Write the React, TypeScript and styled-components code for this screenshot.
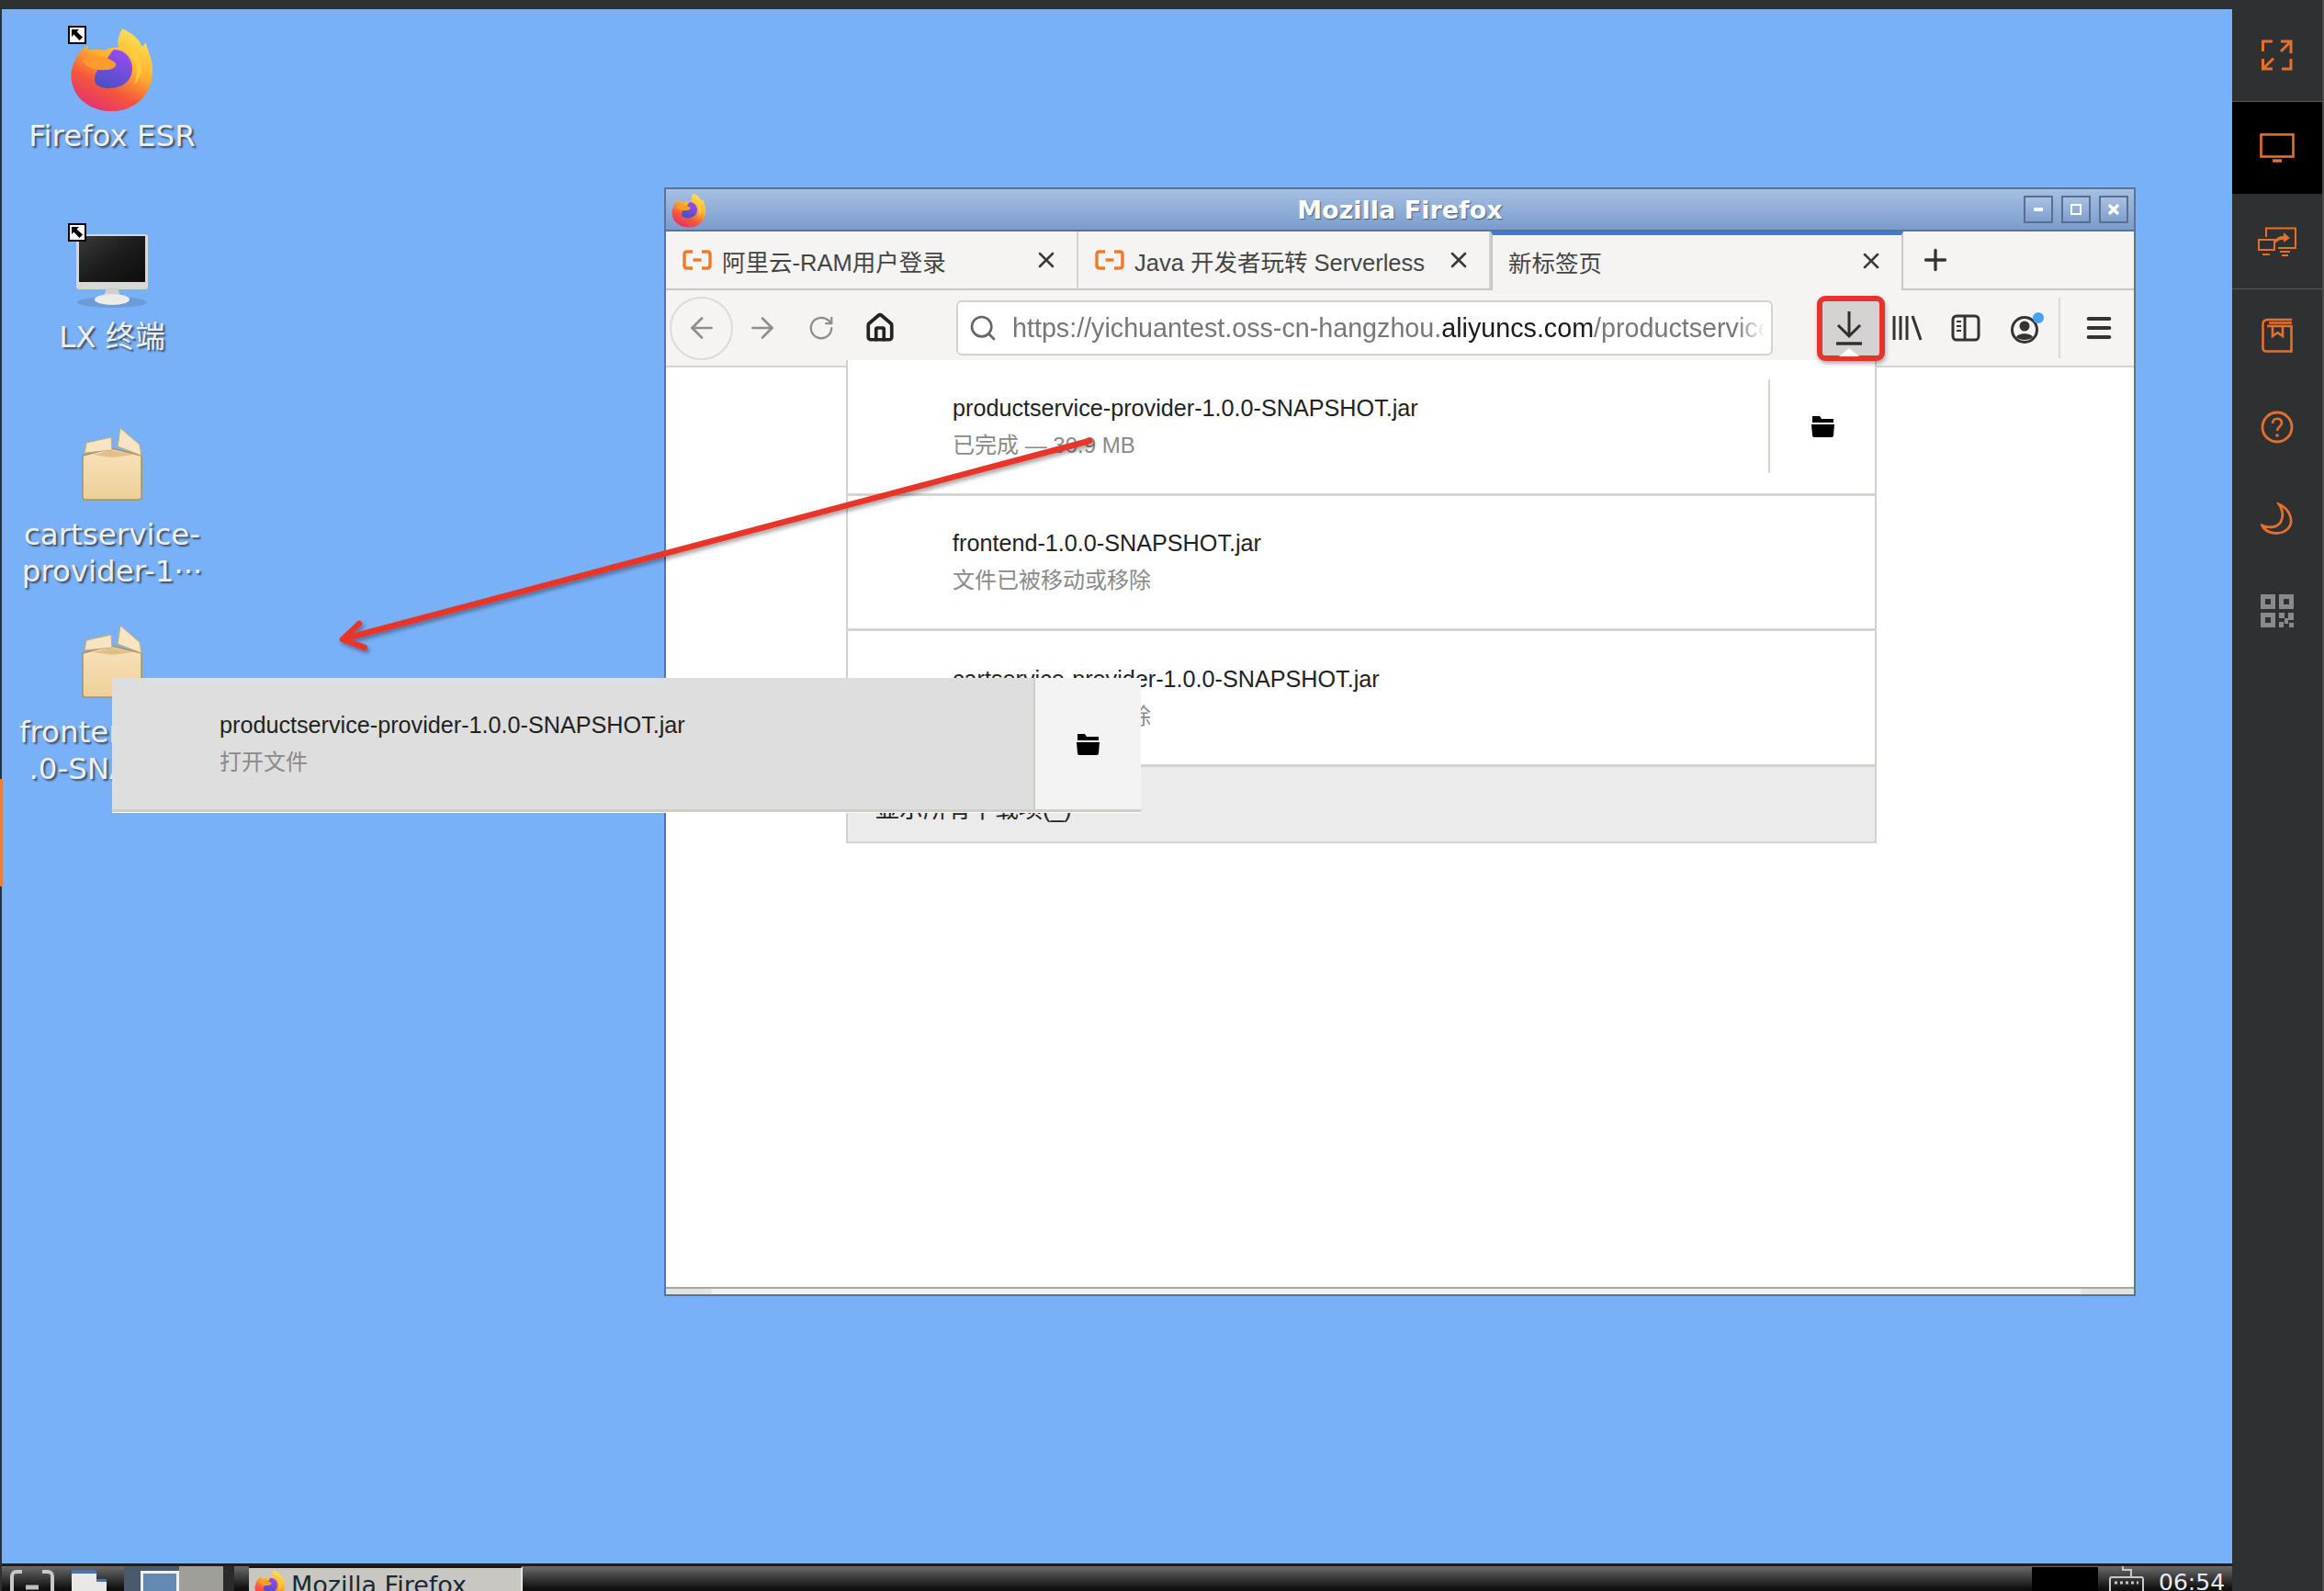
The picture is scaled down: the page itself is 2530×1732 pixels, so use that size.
import styled, { createGlobalStyle } from "styled-components";
import { ArrowLeft, ArrowRight, Home, Menu, Plus, RotateCw, Search, X } from "lucide-react";

const SANS = `"Liberation Sans", "Noto Sans CJK SC", sans-serif`;
const DEJAVU = `"DejaVu Sans", "Noto Sans CJK SC", sans-serif`;
const ORANGE = "#e5702e";

const GlobalStyle = createGlobalStyle`
  html, body { margin: 0; padding: 0; background: #2f3032; }
  * { box-sizing: border-box; }
`;

function FirefoxLogo({ size }: { size: number }) {
  const id = `ff${size}`;
  return (
    <svg width={size} height={size} viewBox="0 0 100 100">
      <defs>
        <linearGradient id={`${id}a`} x1="0.8" y1="0" x2="0.3" y2="1">
          <stop offset="0" stopColor="#ffe75a" />
          <stop offset="0.42" stopColor="#ffb02e" />
          <stop offset="0.72" stopColor="#f6563c" />
          <stop offset="1" stopColor="#e2326e" />
        </linearGradient>
        <linearGradient id={`${id}b`} x1="0.7" y1="0" x2="0.3" y2="1">
          <stop offset="0" stopColor="#9a4cf0" />
          <stop offset="1" stopColor="#4a4fc4" />
        </linearGradient>
      </defs>
      <path
        d="M62 1C58 9 55 17 58 24C52 23 46 24 42 27C34 26 28 25 22 27C21 25 21 22 22 20C14 25 8 32 4 44C1 52 1 60 3 67C8 87 28 99 50 99C76 99 97 80 98 54C99 36 91 26 90 17C88 21 86 22 85 22C82 12 72 6 62 1Z"
        fill={`url(#${id}a)`}
      />
      <path d="M52 26C70 26 78 44 72 58C66 72 44 76 32 68C26 62 30 50 40 44C44 38 46 32 52 26Z" fill={`url(#${id}b)`} />
      <path d="M14 40C26 30 44 34 54 42C57 46 50 50 42 50C30 52 20 46 14 40Z" fill="#ff9a2e" />
      <path d="M62 24C76 30 84 48 76 68C90 54 86 34 74 22C70 20 66 21 62 24Z" fill="#ffcb3d" />
    </svg>
  );
}

function ShortcutBadge() {
  return (
    <Badge>
      <svg width="14" height="14" viewBox="0 0 14 14">
        <path d="M1 1H9L6.6 3.4L13 9.5L9.5 13L3.4 6.6L1 9Z" fill="#000" />
      </svg>
    </Badge>
  );
}

function MonitorArt() {
  return (
    <svg width="90" height="84" viewBox="0 0 90 84">
      <defs>
        <linearGradient id="screen" x1="0" y1="0" x2="1" y2="1">
          <stop offset="0" stopColor="#3a3a3a" />
          <stop offset="0.5" stopColor="#1c1c1c" />
          <stop offset="1" stopColor="#0c0c0c" />
        </linearGradient>
      </defs>
      <ellipse cx="45" cy="76" rx="38" ry="6" fill="#5f86b8" opacity="0.5" />
      <rect x="6" y="2" width="78" height="60" rx="3" fill="#d8d8d6" />
      <rect x="9" y="4" width="72" height="50" fill="url(#screen)" />
      <path d="M36 70L39 60H51L54 70Z" fill="#cfcfcd" />
      <ellipse cx="45" cy="73" rx="19" ry="6" fill="#ececea" />
    </svg>
  );
}

function PackageArt() {
  return (
    <svg width="70" height="80" viewBox="0 0 70 80">
      <defs>
        <linearGradient id="boxFront" x1="0" y1="0" x2="0" y2="1">
          <stop offset="0" stopColor="#f8e3bc" />
          <stop offset="1" stopColor="#edcf98" />
        </linearGradient>
      </defs>
      <path d="M3 31L34 23L67 31V76C67 78 66 79 64 79H6C4 79 3 78 3 76Z" fill="url(#boxFront)" stroke="#b08f5c" strokeWidth="1.5" />
      <path d="M5 28L7 17L34 11L35 25Z" fill="#f7e4c2" stroke="#c6a877" />
      <path d="M44 1L41 21L67 31L65 19Z" fill="#f7e4c2" stroke="#c6a877" />
      <path d="M14 30L35 25L58 30L35 33Z" fill="#dfc08b" />
    </svg>
  );
}

function FolderGlyph() {
  return (
    <svg width="27" height="24" viewBox="0 0 27 24">
      <path d="M2 1H10L12 4H25V8H2Z" fill="#000" />
      <path d="M1 10H26L25 22C25 23 24 24 23 24H4C3 24 2 23 2 22Z" fill="#000" />
    </svg>
  );
}

function AliyunGlyph() {
  return (
    <svg width="32" height="22" viewBox="0 0 32 22" fill="none" stroke="#ef7a2a" strokeWidth="3.4">
      <path d="M11 2H5C3 2 2 3 2 5V17C2 19 3 20 5 20H11" />
      <path d="M21 2H27C29 2 30 3 30 5V17C30 19 29 20 27 20H21" />
      <path d="M11.5 11H20.5" />
    </svg>
  );
}

const desktopItems = [
  { key: "firefox", art: <FirefoxLogo size={92} />, lines: ["Firefox ESR"], shortcut: true, slot: 118, lift: 6 },
  { key: "term", art: <MonitorArt />, lines: ["LX 终端"], shortcut: true, slot: 122, lift: 10 },
  { key: "cart", art: <PackageArt />, lines: ["cartservice-", "provider-1···"], shortcut: false, slot: 122, lift: 17 },
  { key: "front", art: <PackageArt />, lines: ["frontend-1.0", ".0-SNAPS···"], shortcut: false, slot: 122, lift: 17 },
];

const tabs = [
  { label: "阿里云-RAM用户登录", icon: true, active: false },
  { label: "Java 开发者玩转 Serverless", icon: true, active: false },
  { label: "新标签页", icon: false, active: true },
];

const downloads = [
  { name: "productservice-provider-1.0.0-SNAPSHOT.jar", note: "已完成 — 30.9 MB", open: true },
  { name: "frontend-1.0.0-SNAPSHOT.jar", note: "文件已被移动或移除", open: false },
  { name: "cartservice-provider-1.0.0-SNAPSHOT.jar", note: "文件已被移动或移除", open: false },
];

export default function App() {
  return (
    <>
      <GlobalStyle />
      <Screen>
        <TopStrip />
        <Body>
          <Desktop>
            <IconColumn>
              {desktopItems.map((item) => (
                <DesktopIcon key={item.key}>
                  <ArtSlot $height={item.slot} $lift={item.lift}>
                    {item.art}
                    {item.shortcut && <ShortcutBadge />}
                  </ArtSlot>
                  {item.lines.map((line) => (
                    <IconLabel key={line}>{line}</IconLabel>
                  ))}
                </DesktopIcon>
              ))}
            </IconColumn>

            <EdgeMark />

            <Window>
              <TitleBar>
                <TitleLogo>
                  <FirefoxLogo size={38} />
                </TitleLogo>
                <TitleText>Mozilla Firefox</TitleText>
                <WindowButtons>
                  <WindowButton>
                    <svg width="10" height="4" viewBox="0 0 10 4"><rect width="10" height="4" fill="#fff" /></svg>
                  </WindowButton>
                  <WindowButton>
                    <svg width="12" height="12" viewBox="0 0 12 12" fill="none" stroke="#fff" strokeWidth="2"><rect x="1" y="1" width="10" height="10" /></svg>
                  </WindowButton>
                  <WindowButton>
                    <svg width="12" height="12" viewBox="0 0 12 12" stroke="#fff" strokeWidth="3.4"><path d="M1 1L11 11M11 1L1 11" /></svg>
                  </WindowButton>
                </WindowButtons>
              </TitleBar>

              <TabBar>
                {tabs.map((tab) => (
                  <Tab key={tab.label} $active={tab.active}>
                    {tab.icon && (
                      <TabIcon>
                        <AliyunGlyph />
                      </TabIcon>
                    )}
                    <TabLabel>{tab.label}</TabLabel>
                    <TabClose>
                      <X size={28} strokeWidth={2.2} color="#3a3a3a" />
                    </TabClose>
                  </Tab>
                ))}
                <NewTab>
                  <Plus size={36} strokeWidth={2.2} color="#333" />
                </NewTab>
              </TabBar>

              <NavBar>
                <BackButton>
                  <ArrowLeft size={36} strokeWidth={1.8} color="#8e8e8e" />
                </BackButton>
                <NavButton>
                  <ArrowRight size={36} strokeWidth={1.8} color="#8e8e8e" />
                </NavButton>
                <NavButton>
                  <RotateCw size={30} strokeWidth={1.8} color="#8e8e8e" />
                </NavButton>
                <NavButton>
                  <Home size={34} strokeWidth={2.6} color="#222" />
                </NavButton>
                <UrlBox>
                  <Search size={32} strokeWidth={2} color="#666" />
                  <UrlText>
                    https://yichuantest.oss-cn-hangzhou.<strong>aliyuncs.com</strong>/productservice
                  </UrlText>
                </UrlBox>
                <DownloadButton>
                  <svg width="34" height="40" viewBox="0 0 34 40" fill="none" stroke="#2e2e2e" strokeWidth="3">
                    <path d="M17 2V28M5 17L17 29L29 17" />
                    <path d="M3 37H31" strokeWidth="3.4" />
                  </svg>
                  <Notch />
                </DownloadButton>
                <ToolButton>
                  <svg width="34" height="30" viewBox="0 0 34 30" fill="none" stroke="#333" strokeWidth="3">
                    <path d="M3 2V28M10 2V28M17 2V28M23 2L32 28" />
                  </svg>
                </ToolButton>
                <ToolButton>
                  <svg width="32" height="30" viewBox="0 0 32 30" fill="none" stroke="#333" strokeWidth="3">
                    <rect x="2" y="2" width="28" height="26" rx="4" />
                    <path d="M15 2V28" />
                    <path d="M6 8H11M6 13H11M6 18H11" strokeWidth="2" />
                  </svg>
                </ToolButton>
                <AccountButton>
                  <svg width="38" height="36" viewBox="0 0 38 36">
                    <circle cx="16" cy="20" r="13.5" fill="none" stroke="#333" strokeWidth="3" />
                    <circle cx="16" cy="16" r="5.5" fill="#333" />
                    <path d="M7 28C9 23 23 23 25 28C21 32 11 32 7 28Z" fill="#333" />
                    <circle cx="31" cy="7" r="6" fill="#45a1ff" />
                  </svg>
                </AccountButton>
                <ToolDivider />
                <MenuButton>
                  <Menu size={34} strokeWidth={2.8} color="#333" />
                </MenuButton>
              </NavBar>

              <PageArea />
              <ScrollStrip />

              <DownloadPanel>
                {downloads.map((row) => (
                  <DownloadRow key={row.name}>
                    <RowText>
                      <FileName>{row.name}</FileName>
                      <FileNote>{row.note}</FileNote>
                    </RowText>
                    {row.open && (
                      <RowAction>
                        <FolderGlyph />
                      </RowAction>
                    )}
                  </DownloadRow>
                ))}
                <PanelFooter>显示所有下载项(_)</PanelFooter>
              </DownloadPanel>
            </Window>

            <DragGhost>
              <GhostMain>
                <FileName>productservice-provider-1.0.0-SNAPSHOT.jar</FileName>
                <FileNote>打开文件</FileNote>
              </GhostMain>
              <GhostAction>
                <FolderGlyph />
              </GhostAction>
            </DragGhost>

            <Taskbar>
              <TaskLauncher>
                <svg width="50" height="30" viewBox="0 0 50 30" fill="none" stroke="#c8c8c8" strokeWidth="4">
                  <path d="M14 6H8C5 6 3 8 3 11V30M36 6H42C45 6 47 8 47 11V30" />
                  <path d="M18 23H32" strokeWidth="5" stroke="#bdbdbd" />
                </svg>
              </TaskLauncher>
              <TaskFiles>
                <svg width="40" height="30" viewBox="0 0 40 30">
                  <rect x="1" y="4" width="27" height="26" fill="#e8e8e4" />
                  <rect x="1" y="4" width="27" height="4" fill="#4a74ab" />
                  <rect x="28" y="14" width="11" height="16" fill="#e8e8e4" />
                  <rect x="28" y="14" width="11" height="3" fill="#4a74ab" />
                </svg>
              </TaskFiles>
              <PagerActive>
                <PagerWindow />
              </PagerActive>
              <PagerIdle />
              <TaskItem>
                <FirefoxLogo size={34} />
                <TaskItemLabel>Mozilla Firefox</TaskItemLabel>
              </TaskItem>
              <TaskSpacer />
              <TrayBlack />
              <TrayKeyboard>
                <svg width="38" height="28" viewBox="0 0 38 28" fill="none" stroke="#c8c8c8" strokeWidth="2">
                  <path d="M15 0V4H24V12" />
                  <rect x="1" y="12" width="36" height="18" rx="2" />
                  <path d="M6 18H32" strokeDasharray="3 3" strokeWidth="3" />
                </svg>
              </TrayKeyboard>
              <Clock>06:54</Clock>
            </Taskbar>
          </Desktop>

          <SideRail>
            <RailItem $height={111} $divider $nudge={10}>
              <svg width="34" height="34" viewBox="0 0 34 34" fill="none" stroke={ORANGE} strokeWidth="3">
                <path d="M1.5 13V2H12M32 15V2H21M32 2L21 13M1.5 32L13 20.5M1.5 21V32H12M32 21V32H22" />
              </svg>
            </RailItem>
            <RailItem $height={100} $active>
              <svg width="38" height="32" viewBox="0 0 38 32" fill="none" stroke={ORANGE} strokeWidth="2.6">
                <rect x="1.5" y="1.5" width="35" height="24" />
                <path d="M14 30H24" strokeWidth="3.4" />
              </svg>
            </RailItem>
            <RailItem $height={104} $divider>
              <svg width="42" height="32" viewBox="0 0 42 32" fill="none" stroke={ORANGE} strokeWidth="2">
                <path d="M9 11V1.5H41V23H22" />
                <rect x="1" y="14" width="17" height="11" />
                <path d="M5 30H13M24 27H35M26 31H33" />
                <path d="M18 16C20 11 24 10 28 10V6L35 12L28 17V14C24 14 21 15 18 19Z" fill={ORANGE} stroke="none" />
              </svg>
            </RailItem>
            <RailItem $height={100}>
              <svg width="34" height="38" viewBox="0 0 34 38" fill="none" stroke={ORANGE} strokeWidth="2.6">
                <path d="M33 2H7C3 2 1.5 4 1.5 7V33C1.5 35 3 36.5 5 36.5H32.5V9H6" />
                <path d="M12 9V20L17.5 16L23 20V9M8 5.5H33" />
              </svg>
            </RailItem>
            <RailItem $height={100}>
              <svg width="36" height="36" viewBox="0 0 36 36" fill="none" stroke={ORANGE} strokeWidth="2.8">
                <circle cx="18" cy="18" r="16" />
                <path d="M13 14C13 7 23 7 23 13.5C23 17.5 18 17.5 18 22" strokeWidth="2.6" />
                <circle cx="18" cy="27" r="1.8" fill={ORANGE} stroke="none" />
              </svg>
            </RailItem>
            <RailItem $height={100}>
              <svg width="36" height="36" viewBox="0 0 36 36" fill="none" stroke={ORANGE} strokeWidth="2.8">
                <path d="M20 2C32 7 38 22 28 30C20 36 6 34 1.5 25C8 28 18 28 22 21C25 15 24 8 20 2Z" />
              </svg>
            </RailItem>
            <RailItem $height={100}>
              <svg width="36" height="36" viewBox="0 0 36 36">
                <path d="M0 0H16V16H0ZM5 5V11H11V5Z" fill="#8a8a8a" fillRule="evenodd" />
                <path d="M20 0H36V16H20ZM25 5V11H31V5Z" fill="#8a8a8a" fillRule="evenodd" />
                <path d="M0 20H16V36H0ZM5 25V31H11V25Z" fill="#8a8a8a" fillRule="evenodd" />
                <path d="M20 20H26V26H20ZM30 20H36V28H30ZM26 26H30V32H26ZM20 30H25V36H20ZM31 31H36V36H31Z" fill="#8a8a8a" />
              </svg>
            </RailItem>
          </SideRail>
        </Body>

        <ArrowLayer viewBox="0 0 2530 1732" width="2530" height="1732">
          <defs>
            <filter id="arrowShadow" x="-5%" y="-5%" width="110%" height="110%">
              <feDropShadow dx="2" dy="3" stdDeviation="2" floodColor="#000" floodOpacity="0.35" />
            </filter>
          </defs>
          <g filter="url(#arrowShadow)" fill="none" stroke="#e8362a" strokeWidth="6.5" strokeLinecap="round" strokeLinejoin="round">
            <path d="M1186 480L376 695" />
            <path d="M391 679L373 696L397 705" />
          </g>
        </ArrowLayer>
      </Screen>
    </>
  );
}

const Screen = styled.div`
  position: relative;
  display: flex;
  flex-direction: column;
  width: 2530px;
  height: 1732px;
  overflow: hidden;
  background: #2f3032;
  font-family: ${SANS};
`;

const TopStrip = styled.div`
  height: 10px;
  flex: none;
  background: #2f3032;
`;

const Body = styled.div`
  flex: 1;
  display: flex;
  min-height: 0;
`;

const Desktop = styled.main`
  position: relative;
  flex: 1;
  display: flex;
  flex-direction: column;
  margin-left: 2px;
  background: #79b1f8;
  min-width: 0;
`;

const EdgeMark = styled.div`
  position: absolute;
  left: -2px;
  top: 838px;
  width: 3px;
  height: 117px;
  background: #e8803a;
`;

const IconColumn = styled.div`
  flex: 1;
  display: flex;
  flex-direction: column;
  width: 240px;
`;

const DesktopIcon = styled.div`
  height: 215px;
  display: flex;
  flex-direction: column;
  align-items: center;
`;

const ArtSlot = styled.div<{ $height: number; $lift: number }>`
  position: relative;
  height: ${(p) => p.$height}px;
  width: 100px;
  padding-bottom: ${(p) => p.$lift}px;
  display: flex;
  justify-content: center;
  align-items: flex-end;
`;

const Badge = styled.span`
  position: absolute;
  left: 2px;
  top: 18px;
  width: 20px;
  height: 20px;
  display: flex;
  align-items: center;
  justify-content: center;
  background: #fff;
  border: 2px solid #000;
`;

const IconLabel = styled.div`
  font-family: ${DEJAVU};
  font-size: 32.5px;
  line-height: 40px;
  color: #efefef;
  white-space: nowrap;
  text-shadow: 2px 2px 2px rgba(40, 40, 40, 0.75);
`;

const Window = styled.section`
  position: absolute;
  left: 721px;
  top: 194px;
  width: 1602px;
  height: 1207px;
  display: flex;
  flex-direction: column;
  border: 2px solid #5b7394;
  background: #fff;
`;

const TitleBar = styled.header`
  position: relative;
  height: 46px;
  flex: none;
  display: flex;
  align-items: center;
  justify-content: center;
  background: linear-gradient(#a6bfe3, #7a9ccd);
  border-bottom: 2px solid #5b7394;
`;

const TitleLogo = styled.span`
  position: absolute;
  left: 6px;
  top: 4px;
  display: flex;
`;

const TitleText = styled.h1`
  margin: 0;
  font-family: ${DEJAVU};
  font-size: 27px;
  font-weight: bold;
  color: #fff;
  text-shadow: 1px 1px 1px rgba(40, 60, 90, 0.7);
`;

const WindowButtons = styled.div`
  position: absolute;
  right: 6px;
  top: 7px;
  display: flex;
  gap: 9px;
`;

const WindowButton = styled.span`
  width: 32px;
  height: 30px;
  display: flex;
  align-items: center;
  justify-content: center;
  background: linear-gradient(#a9c0e2, #7f9fce);
  border: 2px solid #56708f;
`;

const TabBar = styled.nav`
  height: 64px;
  flex: none;
  display: flex;
  background: #f5f4f3;
  border-bottom: 2px solid #c9c7c4;
`;

const Tab = styled.div<{ $active: boolean }>`
  position: relative;
  width: 449px;
  height: ${(p) => (p.$active ? "64px" : "62px")};
  display: flex;
  align-items: center;
  padding-left: ${(p) => (p.$active ? "17px" : "18px")};
  padding-right: 19px;
  padding-bottom: ${(p) => (p.$active ? "4px" : "0")};
  color: #444;
  font-size: 25.5px;
  background: #f5f4f3;
  border-right: 2px solid ${(p) => (p.$active ? "#c9c7c4" : "#d4d2cf")};
  border-top: ${(p) => (p.$active ? "4px solid #3f7ad6" : "none")};
  border-left: ${(p) => (p.$active ? "2px solid #c9c7c4" : "none")};
  z-index: ${(p) => (p.$active ? 1 : 0)};
`;

const TabIcon = styled.span`
  display: flex;
  margin-right: 11px;
  flex: none;
`;

const TabLabel = styled.span`
  flex: 1;
  white-space: nowrap;
  overflow: hidden;
`;

const TabClose = styled.span`
  display: flex;
  flex: none;
`;

const NewTab = styled.div`
  width: 70px;
  display: flex;
  align-items: center;
  justify-content: center;
`;

const NavBar = styled.div`
  height: 84px;
  flex: none;
  display: flex;
  align-items: center;
  padding-left: 4px;
  background: #f5f4f3;
  border-bottom: 2px solid #d6d4d1;
`;

const BackButton = styled.span`
  width: 69px;
  height: 69px;
  flex: none;
  display: flex;
  align-items: center;
  justify-content: center;
  border: 2px solid #dcdbd9;
  border-radius: 50%;
`;

const NavButton = styled.span`
  width: 64px;
  flex: none;
  display: flex;
  justify-content: center;
`;

const UrlBox = styled.div`
  width: 889px;
  height: 60px;
  flex: none;
  margin-left: 51px;
  display: flex;
  align-items: center;
  gap: 16px;
  padding-left: 11px;
  padding-right: 6px;
  background: #fff;
  border: 2px solid #d4d2cf;
  border-radius: 6px;
  overflow: hidden;
`;

const UrlText = styled.span`
  flex: 1;
  font-size: 28.7px;
  color: #777;
  white-space: nowrap;
  overflow: hidden;
  mask-image: linear-gradient(90deg, #000 96%, transparent);

  strong {
    font-weight: normal;
    color: #1a1a1a;
  }
`;

const DownloadButton = styled.span`
  position: relative;
  width: 74px;
  height: 71px;
  flex: none;
  margin-left: 48px;
  margin-right: -8px;
  padding-right: 5px;
  display: flex;
  align-items: center;
  justify-content: center;
  background: #d4d3d2;
  border: 6px solid #e5352a;
  border-radius: 9px;
  box-shadow: 1px 3px 4px rgba(0, 0, 0, 0.3);
  z-index: 3;
`;

const Notch = styled.span`
  position: absolute;
  left: 50%;
  bottom: -1px;
  margin-left: -13px;
  border-left: 11px solid transparent;
  border-right: 11px solid transparent;
  border-bottom: 9px solid #fff;
`;

const ToolButton = styled.span`
  width: 64px;
  flex: none;
  display: flex;
  justify-content: center;
`;

const AccountButton = styled(ToolButton)`
  padding-left: 5px;
`;

const ToolDivider = styled.span`
  width: 2px;
  height: 66px;
  flex: none;
  margin-left: 5px;
  background: #dcdad8;
`;

const MenuButton = styled.span`
  width: 64px;
  flex: none;
  margin-left: 10px;
  display: flex;
  justify-content: center;
`;

const PageArea = styled.div`
  flex: 1;
  background: #fff;
`;

const ScrollStrip = styled.div`
  height: 8px;
  flex: none;
  background: linear-gradient(90deg, #e4e3e1 50px, #f4f3f1 50px, #f4f3f1 1540px, #e4e3e1 1540px);
  border-top: 2px solid #a8a6a3;
`;

const DownloadPanel = styled.div`
  position: absolute;
  left: 196px;
  top: 186px;
  width: 1122px;
  height: 526px;
  display: flex;
  flex-direction: column;
  background: #fff;
  border: 2px solid #d4d2cf;
  border-top: none;
`;

const DownloadRow = styled.div`
  height: 147.5px;
  flex: none;
  display: flex;
  align-items: center;
  border-bottom: 3px solid #d6d4d1;
`;

const RowText = styled.div`
  flex: 1;
  padding-left: 114px;
`;

const FileName = styled.div`
  font-size: 25.2px;
  line-height: 30px;
  color: #222;
  white-space: nowrap;
`;

const FileNote = styled.div`
  margin-top: 11px;
  font-size: 24px;
  line-height: 30px;
  color: #8a8a8a;
  white-space: nowrap;
`;

const RowAction = styled.div`
  width: 116px;
  height: 102px;
  display: flex;
  align-items: center;
  justify-content: center;
  border-left: 2px solid #d6d4d1;
`;

const PanelFooter = styled.div`
  flex: 1;
  padding: 25px 0 0 30px;
  font-size: 26px;
  color: #222;
  background: #ebebeb;
`;

const DragGhost = styled.div`
  position: absolute;
  left: 120px;
  top: 728px;
  width: 1120px;
  height: 146px;
  display: flex;
  border-bottom: 3px solid #cfcdca;
  box-shadow: 0 1px 0 #fff;
  z-index: 4;
`;

const GhostMain = styled.div`
  flex: 1;
  display: flex;
  flex-direction: column;
  justify-content: center;
  padding-left: 117px;
  background: #dfdedf;
`;

const GhostAction = styled.div`
  width: 117px;
  display: flex;
  align-items: center;
  justify-content: center;
  background: #f4f3f3;
  border-left: 2px solid #cfcdca;
`;

const Taskbar = styled.footer`
  height: 30px;
  flex: none;
  display: flex;
  overflow: hidden;
  background: linear-gradient(#6a6a6a, #101010 90%);
  border-top: 3px solid #1d1f22;
`;

const TaskLauncher = styled.span`
  width: 75px;
  padding-left: 8px;
  display: flex;
`;

const TaskFiles = styled.span`
  width: 58px;
  display: flex;
`;

const PagerActive = styled.span`
  width: 60px;
  padding: 5px 0 0 18px;
  background: #4a5a6c;
`;

const PagerWindow = styled.span`
  display: block;
  width: 42px;
  height: 40px;
  background: #6489b3;
  border: 3px solid #f0f0f0;
`;

const PagerIdle = styled.span`
  width: 60px;
  background: #a09e98;
  border-right: 12px solid #2a2a2a;
`;

const TaskItem = styled.span`
  width: 298px;
  margin-left: 16px;
  padding: 2px 0 0 6px;
  display: flex;
  gap: 6px;
  background: #c9c7c2;
  border-top: 2px solid #141414;
  border-right: 2px solid #e6e6e6;
`;

const TaskItemLabel = styled.span`
  font-family: ${DEJAVU};
  font-size: 27px;
  line-height: 34px;
  color: #1b2735;
  white-space: nowrap;
`;

const TaskSpacer = styled.span`
  flex: 1;
`;

const TrayBlack = styled.span`
  width: 72px;
  margin-top: 1px;
  background: #000;
`;

const TrayKeyboard = styled.span`
  width: 66px;
  padding-left: 12px;
  display: flex;
`;

const Clock = styled.span`
  width: 80px;
  font-family: ${DEJAVU};
  font-size: 25px;
  line-height: 36px;
  color: #e3edf8;
  white-space: nowrap;
`;

const SideRail = styled.aside`
  width: 100px;
  flex: none;
  display: flex;
  flex-direction: column;
  margin-top: -10px;
  background: #2f3032;
  border-right: 2px solid #4a4a4b;
`;

const RailItem = styled.div<{ $height: number; $active?: boolean; $divider?: boolean; $nudge?: number }>`
  height: ${(p) => p.$height}px;
  flex: none;
  display: flex;
  align-items: center;
  justify-content: center;
  padding-top: ${(p) => p.$nudge ?? 0}px;
  background: ${(p) => (p.$active ? "#000" : "transparent")};
  border-bottom: ${(p) => (p.$divider ? "1px solid #565656" : "none")};
`;

const ArrowLayer = styled.svg`
  position: absolute;
  left: 0;
  top: 0;
  pointer-events: none;
  z-index: 10;
`;
